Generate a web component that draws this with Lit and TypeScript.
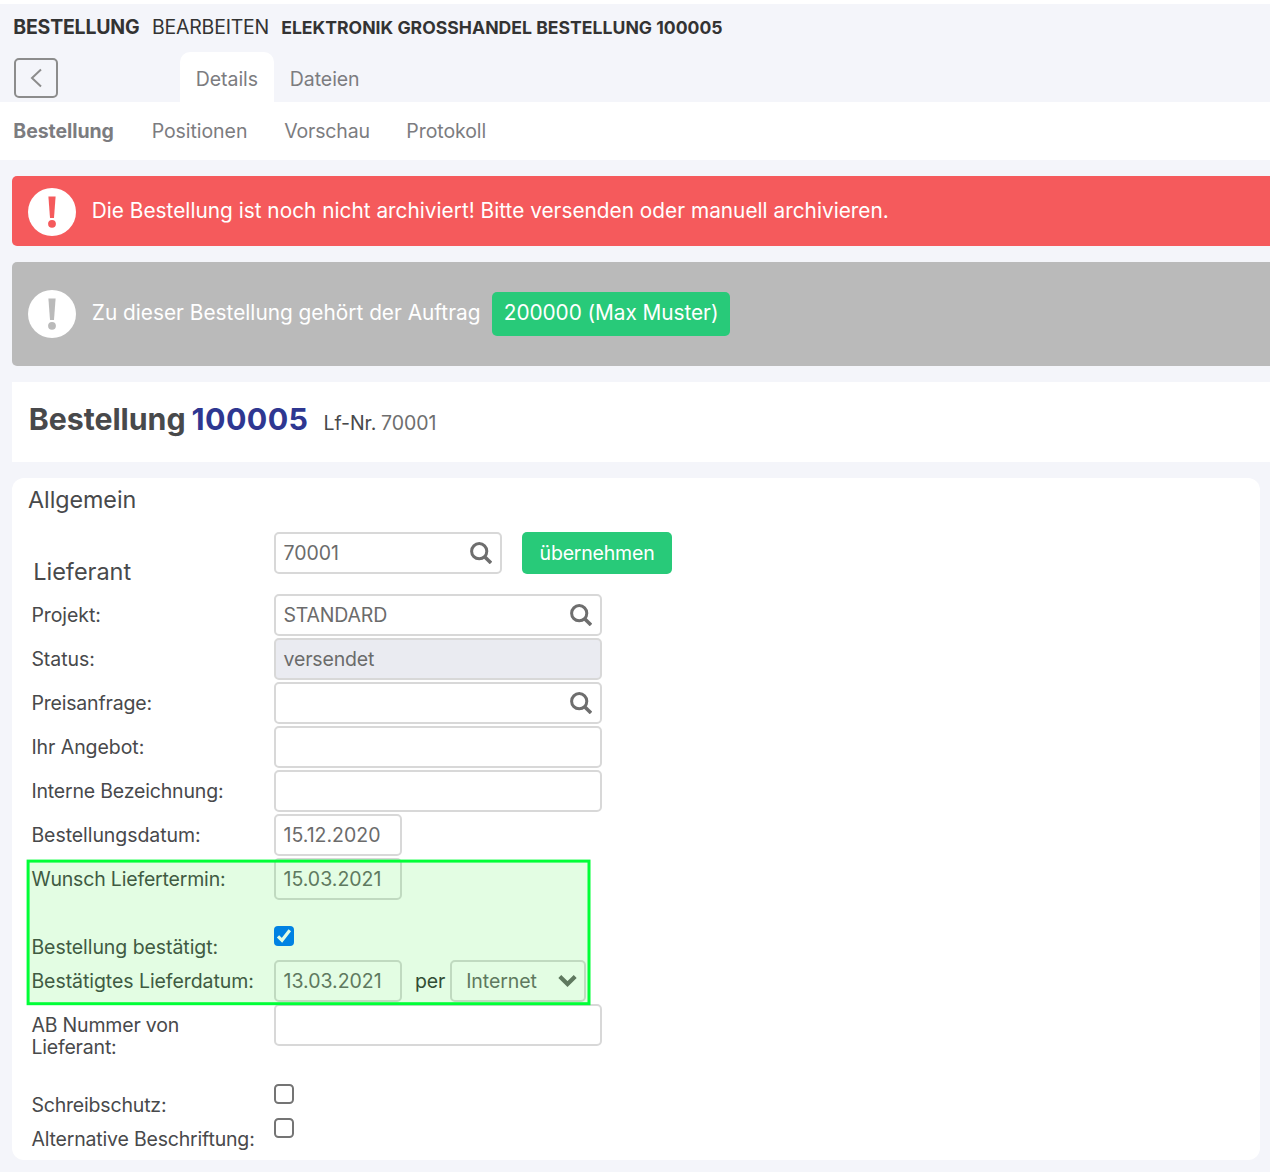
import { LitElement, html, css, svg, nothing } from "lit";
import { customElement, property } from "lit/decorators.js";
import { classMap } from "lit/directives/class-map.js";

interface Row {
  label: string;
  value?: string;
  kind?: "text" | "search" | "readonly" | "date" | "check" | "dateSelect";
  checked?: boolean;
  size?: "tall" | "offset" | "last";
  track?: "tight" | "normal";
}

const ROWS: Row[] = [
  { label: "Projekt:", value: "STANDARD", kind: "search" },
  { label: "Status:", value: "versendet", kind: "readonly" },
  { label: "Preisanfrage:", kind: "search", track: "tight" },
  { label: "Ihr Angebot:", kind: "text" },
  { label: "Interne Bezeichnung:", kind: "text", track: "tight" },
  { label: "Bestellungsdatum:", value: "15.12.2020", kind: "date" },
  { label: "Wunsch Liefertermin:", value: "15.03.2021", kind: "date", track: "tight" },
  { label: "Bestellung bestätigt:", kind: "check", checked: true, size: "offset" },
  { label: "Bestätigtes Lieferdatum:", value: "13.03.2021", kind: "dateSelect" },
  { label: "AB Nummer von Lieferant:", kind: "text", size: "tall", track: "tight" },
  { label: "Schreibschutz:", kind: "check", size: "offset", track: "tight" },
  { label: "Alternative Beschriftung:", kind: "check", size: "last", track: "tight" },
];

const searchIcon = svg`<svg class="glass" viewBox="0 0 22 22" width="22" height="22">
  <circle cx="9.2" cy="9.2" r="7.6" fill="none" stroke="#6e6e6e" stroke-width="3"/>
  <path d="M14.4 14.4L21 21" stroke="#6e6e6e" stroke-width="3.6"/>
</svg>`;

@customElement("notice-bar")
class NoticeBar extends LitElement {
  @property() tone = "alert";
  static styles = css`
    :host { display: block; }
    .bar {
      display: flex; box-sizing: border-box; padding-left: 16px; align-items: center;
      border-radius: 5px 0 0 5px; color: #fff; font-size: 20.8px; line-height: 26px;
    }
    .alert { height: 70px; background: #f55a5c; padding-top: 2px; }
    .info { height: 104px; background: #bababa; }
    svg { display: block; flex: none; margin-right: 15.8px; }
    .content { display: flex; align-items: center; padding-bottom: 3px; }
    .info .content { padding-bottom: 0; }
  `;
  render() {
    return html`<div class=${classMap({ bar: true, [this.tone]: true })}>
      <svg viewBox="0 0 48 48" width="48" height="48">
        <circle cx="24" cy="24" r="24" fill="#fff"/>
        <g fill=${this.tone === "alert" ? "#f55a5c" : "#bababa"}>
          <path d="M20.4 8.6H27.6L26 30H22Z"/>
          <circle cx="24" cy="35.8" r="3.9"/>
        </g>
      </svg>
      <div class="content"><slot></slot></div>
    </div>`;
  }
}

@customElement("app-root")
class AppRoot extends LitElement {
  static styles = css`
    :host {
      display: block; box-sizing: border-box; height: 1172px; overflow: hidden;
      padding-top: 4px; background: linear-gradient(#fff 4px, #f4f5fa 4px);
      font-family: Inter, "Liberation Sans", sans-serif; font-size: 19.5px; line-height: 22px;
      letter-spacing: -0.06px; color: #48494b;
    }
    .title {
      display: grid; grid-template-columns: 138.7px 129.2px auto; align-items: baseline;
      height: 48px; box-sizing: border-box; padding: 12px 0 0 13.3px; color: #333; white-space: nowrap;
      letter-spacing: -0.22px;
    }
    .title strong { font-weight: 700; }
    .title .name { font-size: 17.6px; letter-spacing: 0.02px; }
    .tabs { display: flex; height: 50px; color: #7c7c80; }
    .back {
      box-sizing: border-box; width: 44px; height: 40px; margin: 6px 122px 0 14px;
      border: 2px solid #8c8c8c; border-radius: 5px; padding: 8px 0 0 13px;
    }
    .back svg { display: block; }
    .tab { box-sizing: border-box; height: 50px; padding: 16px 15.8px 0; width: 94px; border-radius: 10px 10px 0 0; }
    .tab.active { background: #fff; }
    .subnav {
      display: grid; grid-template-columns: 138.4px 132.6px 122px auto; align-items: center;
      height: 58px; padding-left: 13.3px; background: #fff; color: #7c7c80;
    }
    .tight { letter-spacing: -0.18px; }
    notice-bar { margin: 16px 0 0 12px; letter-spacing: 0.01px; }
    .chip {
      display: block; box-sizing: border-box; height: 44px; line-height: 41px; width: 238px;
      margin-left: 11.5px; padding-left: 11.8px; border-radius: 5px; background: #28ca79; color: #fff;
      white-space: nowrap; letter-spacing: -0.05px;
    }
    .info-text { padding-bottom: 3px; }
    .heading {
      display: flex; align-items: baseline; box-sizing: border-box; height: 80px; margin: 16px 0 0 12px;
      padding: 19px 0 0 16.8px; background: #fff; white-space: nowrap;
    }
    .heading h1 { display: flex; margin: 0; font-size: 30.3px; line-height: 36px; font-weight: 700; letter-spacing: -0.05px; }
    .heading h1 span { width: 162.7px; }
    .heading b { width: 132px; font-weight: 700; color: #2e3791; font-size: 30.4px; letter-spacing: 0.4px; }
    .heading i { font-style: normal; margin-left: 4.8px; color: #6e6e6e; }
    .card {
      position: relative; box-sizing: border-box; width: 1248px; height: 682px; margin: 16px 0 0 12px;
      padding: 8px 0 0 19.4px; border-radius: 12px; background: #fff;
    }
    h2 { margin: 0 0 0 -3.3px; font-size: 23.3px; line-height: 28px; font-weight: 400; }
    .supplier { display: flex; height: 79px; padding-top: 18px; box-sizing: border-box; }
    .supplier .name { width: 240.8px; padding: 25.5px 0 0 1.8px; box-sizing: border-box; margin-right: 1.8px; font-size: 23.5px; line-height: 28px; letter-spacing: 0; }
    .row { display: flex; height: 44px; }
    .row.tall { height: 56px; }
    .row.offset { height: 58px; }
    .row.last { height: 34px; }
    .label { width: 242.6px; padding-top: 11px; box-sizing: border-box; white-space: nowrap; }
    .tall .label { white-space: normal; padding-right: 60px; }
    .offset .label { padding-top: 35px; }
    .last .label { padding-top: 11px; }
    .field {
      display: flex; justify-content: space-between; align-items: center; box-sizing: border-box;
      width: 328px; height: 42px; margin-top: 1px; padding: 0 8px 0 7.5px; border: 2px solid #d8d8d8;
      border-radius: 5px; background: #fff; color: #6b6b6b;
    }
    .field.short { width: 228px; margin-top: 0; letter-spacing: 0; }
    .field.date { width: 128px; letter-spacing: 0; }
    .field.select { width: 136px; padding: 0 7px 0 14.2px; }
    .field.readonly { background: #eaebf1; letter-spacing: -0.15px; }
    .glass { display: block; flex: none; margin-top: -1px; }
    .per { width: 35.1px; padding: 11px 0 0 12.9px; color: #38393b; letter-spacing: -0.1px; }
    .apply {
      box-sizing: border-box; width: 150px; height: 42px; margin-left: 20px; padding: 0 0 0 17.6px; border: 0;
      border-radius: 5px; background: #28ca79; color: #fff; font: inherit; line-height: 42px;
      letter-spacing: -0.2px; text-align: left;
    }
    .box {
      box-sizing: border-box; width: 20px; height: 20px; margin-top: 25px; border: 2px solid #747474;
      border-radius: 4.5px; background: #fff;
    }
    .last .box { margin-top: 1px; }
    .box.on { border: 0; background: #0075ff; border-radius: 4px; }
    .box svg { display: block; }
    .mark { position: absolute; left: 14px; top: 381px; }
  `;

  private field(row: Row) {
    switch (row.kind) {
      case "search":
        return html`<div class="field"><span class="tight">${row.value}</span>${searchIcon}</div>`;
      case "readonly":
        return html`<div class="field readonly">${row.value}</div>`;
      case "date":
        return html`<div class="field date">${row.value}</div>`;
      case "dateSelect":
        return html`<div class="field date">${row.value}</div>
          <span class="per">per</span>
          <div class="field select">Internet
            <svg viewBox="0 0 19 13" width="19" height="13"><path d="M1.8 1.6L9.5 9L17.2 1.6" fill="none" stroke="#6b6b6b" stroke-width="4.2"/></svg>
          </div>`;
      case "check":
        return html`<div class=${classMap({ box: true, on: !!row.checked })}>${row.checked
          ? html`<svg viewBox="0 0 20 20" width="20" height="20"><path d="M4 10.3L8 14.3L15.8 4.2" fill="none" stroke="#fff" stroke-width="3.2"/></svg>`
          : nothing}</div>`;
      default:
        return html`<div class="field">${row.value ?? nothing}</div>`;
    }
  }

  render() {
    return html`
      <header class="title">
        <strong>BESTELLUNG</strong><span>BEARBEITEN</span>
        <strong class="name">ELEKTRONIK GROSSHANDEL BESTELLUNG 100005</strong>
      </header>
      <div class="tabs">
        <div class="back">
          <svg viewBox="0 0 14 20" width="14" height="20"><path d="M12 1.5L3 10L12 18.5" fill="none" stroke="#8c8c8c" stroke-width="2"/></svg>
        </div>
        <div class="tab active">Details</div>
        <div class="tab">Dateien</div>
      </div>
      <nav class="subnav">
        <strong>Bestellung</strong><span>Positionen</span><span class="tight">Vorschau</span><span>Protokoll</span>
      </nav>
      <notice-bar tone="alert">Die Bestellung ist noch nicht archiviert! Bitte versenden oder manuell archivieren.</notice-bar>
      <notice-bar tone="info"><span class="info-text">Zu dieser Bestellung gehört der Auftrag</span><a class="chip">200000 (Max Muster)</a></notice-bar>
      <div class="heading">
        <h1><span>Bestellung</span><b>100005</b></h1>
        <span>Lf-Nr.</span><i>70001</i>
      </div>
      <section class="card">
        <h2>Allgemein</h2>
        <div class="supplier">
          <span class="name">Lieferant</span>
          <div class="field short">70001${searchIcon}</div>
          <button class="apply">übernehmen</button>
        </div>
        ${ROWS.map((row) => html`<div class=${classMap({ row: true, [row.size ?? "regular"]: true })}>
          <div class=${classMap({ label: true, tight: row.track === "tight" })}>${row.label}</div>
          ${this.field(row)}
        </div>`)}
        <svg class="mark" viewBox="0 0 566 148" width="566" height="148">
          <rect x="2.1" y="2.1" width="560.9" height="142.6" fill="#00ee00" fill-opacity="0.11"/>
          <rect x="2.1" y="2.1" width="560.9" height="142.6" fill="none" stroke="#00ff37" stroke-width="3"/>
        </svg>
      </section>
    `;
  }
}
